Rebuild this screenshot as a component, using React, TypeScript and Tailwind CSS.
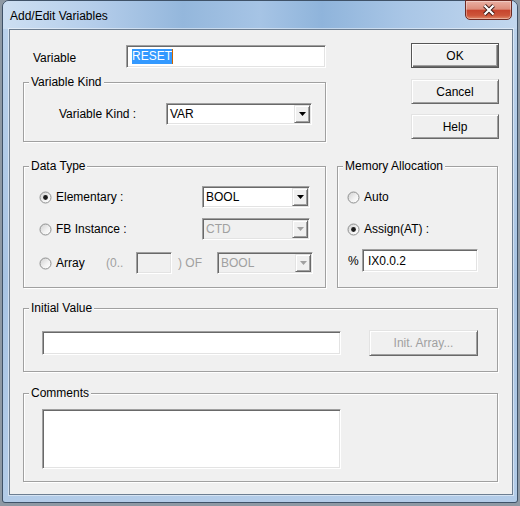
import React from "react";

// classic 3D borders
const sunken =
  "border border-t-[#a0a0a0] border-l-[#a0a0a0] border-b-white border-r-white shadow-[inset_1px_1px_0_#696969,inset_-1px_-1px_0_#e3e3e3]";
const raised =
  "border border-t-[#e3e3e3] border-l-[#e3e3e3] border-b-[#696969] border-r-[#696969] shadow-[inset_1px_1px_0_#fff,inset_-1px_-1px_0_#a0a0a0] bg-[#f0f0f0]";

const Radio = ({ checked }: { checked?: boolean }) => (
  <svg width="13" height="13" viewBox="0 0 13 13" className="shrink-0">
    <defs>
      <linearGradient id="radioFill" x1="0" y1="0" x2="1" y2="1">
        <stop offset="0" stopColor="#cfcfcf" />
        <stop offset="0.6" stopColor="#f4f4f4" />
        <stop offset="1" stopColor="#ffffff" />
      </linearGradient>
    </defs>
    <circle cx="6.5" cy="6.5" r="5.5" fill="url(#radioFill)" stroke="#8e8f8f" />
    {checked && <circle cx="6.5" cy="6.5" r="2.4" fill="#1c1c1c" />}
  </svg>
);

const Arrow = ({ disabled }: { disabled?: boolean }) => (
  <svg width="7" height="4" viewBox="0 0 7 4">
    <polygon points="0,0 7,0 3.5,4" fill={disabled ? "#a0a0a0" : "#000"} />
  </svg>
);

const Combo = ({
  value,
  disabled,
  className = "",
}: {
  value: string;
  disabled?: boolean;
  className?: string;
}) => (
  <div
    className={`${sunken} flex items-stretch p-[1px] h-[22px] ${
      disabled ? "bg-[#f0f0f0] text-[#a0a0a0]" : "bg-white"
    } ${className}`}
  >
    <span className="flex-1 flex items-center pl-[2px]">{value}</span>
    <span className={`${raised} w-[16px] flex items-center justify-center`}>
      <Arrow disabled={disabled} />
    </span>
  </div>
);

const GroupBox = ({
  title,
  className = "",
  children,
}: {
  title: string;
  className?: string;
  children?: React.ReactNode;
}) => (
  <div
    className={`relative border border-[#a0a0a0] shadow-[inset_1px_1px_0_#fff,1px_1px_0_#fff] ${className}`}
  >
    <span className="absolute -top-[8px] left-[5px] px-[2px] bg-[#f0f0f0] leading-[14px] whitespace-nowrap">
      {title}
    </span>
    {children}
  </div>
);

const DlgButton = ({
  label,
  isDefault,
  disabled,
  className = "",
}: {
  label: string;
  isDefault?: boolean;
  disabled?: boolean;
  className?: string;
}) => (
  <div
    className={`flex items-center justify-center ${
      isDefault
        ? "border border-[#555] bg-[#f0f0f0] shadow-[inset_1px_1px_0_#fff,inset_-1px_-1px_0_#696969,inset_-2px_-2px_0_#a0a0a0]"
        : raised
    } ${disabled ? "text-[#a0a0a0]" : "text-black"} ${className}`}
  >
    {label}
  </div>
);

export default function App() {
  return (
    <div className="w-[520px] h-[506px] bg-[#8e99a4] overflow-hidden font-['Liberation_Sans',Arial,sans-serif] text-[12px] leading-[14px] text-black">
      {/* window frame */}
      <div className="ml-[2px] w-[516px] h-[503px] rounded-t-[7px] rounded-b-[3px] border border-[#3f5268] bg-[linear-gradient(180deg,#bcd3ec_0%,#a8c4e3_55%,#b3cce8_100%)] flex flex-col">
        {/* title bar */}
        <div className="h-[28px] flex items-start rounded-t-[6px] bg-[linear-gradient(90deg,#cddff2_0%,#b4cdea_18%,#94b7dc_35%,#a6c4e5_50%,#8fb4db_62%,#a9c6e6_78%,#c2d7ee_100%)]">
          <span className="pl-[7px] pt-[8px] text-black">Add/Edit Variables</span>
          <div className="ml-auto mr-[5px] -mt-[1px] w-[47px] h-[20px] rounded-b-[5px] border border-[#6e2a22] bg-[linear-gradient(180deg,#eab0a3_0%,#dd8d7b_45%,#c7442d_52%,#cd553a_80%,#e08868_100%)] shadow-[inset_0_0_0_1px_rgba(255,255,255,0.35)] flex items-center justify-center">
            <svg width="14" height="12" viewBox="0 0 14 12">
              <path d="M2.5 1.5 L11.5 10.5 M11.5 1.5 L2.5 10.5" stroke="#3a1a16" strokeWidth="4" />
              <path d="M2.5 1.5 L11.5 10.5 M11.5 1.5 L2.5 10.5" stroke="#fff" strokeWidth="2.2" />
            </svg>
          </div>
        </div>

        {/* client area */}
        <div className="ml-[6px] w-[504px] h-[466px] border border-[#6d7e91] bg-[#f0f0f0] shadow-[0_0_0_1px_rgba(255,255,255,0.45)] flex flex-col pl-[13px]">
          {/* top section */}
          <div className="flex">
            <div className="w-[303px] flex flex-col">
              <div className="pt-[15px] flex items-center h-[38px]">
                <span className="pl-[10px] w-[103px] mt-[3px]">Variable</span>
                <div className={`${sunken} bg-white w-[200px] h-[23px] flex items-center pl-[5px]`}>
                  <span className="bg-[#3399ff] text-white leading-[15px]">RESET</span>
                  <span className="w-[1px] h-[15px] bg-[#cc6600]" />
                </div>
              </div>
              <GroupBox title="Variable Kind" className="mt-[14px] h-[60px] pt-[20px]">
                <div className="flex items-center">
                  <span className="pl-[35px] w-[142px]">Variable Kind :</span>
                  <Combo value="VAR" className="w-[146px]" />
                </div>
              </GroupBox>
            </div>
            <div className="ml-[85px] w-[88px] pt-[13px] flex flex-col">
              <DlgButton label="OK" isDefault className="h-[25px]" />
              <DlgButton label="Cancel" className="h-[25px] mt-[11px]" />
              <DlgButton label="Help" className="h-[25px] mt-[10px]" />
            </div>
          </div>

          {/* data type / memory allocation */}
          <div className="flex mt-[24px]">
            <GroupBox title="Data Type" className="w-[303px] h-[122px] pt-[19px] pl-[15px]">
              <div className="flex items-center h-[22px]">
                <Radio checked />
                <span className="ml-[4px] w-[146px]">Elementary :</span>
                <Combo value="BOOL" className="w-[108px]" />
              </div>
              <div className="flex items-center h-[22px] mt-[10px]">
                <Radio />
                <span className="ml-[4px] w-[146px]">FB Instance :</span>
                <Combo value="CTD" disabled className="w-[108px]" />
              </div>
              <div className="flex items-center h-[22px] mt-[12px]">
                <Radio />
                <span className="ml-[4px] w-[50px]">Array</span>
                <span className="w-[30px] text-[#a0a0a0]">(0..</span>
                <div className={`${sunken} bg-[#f0f0f0] w-[36px] h-[22px]`} />
                <span className="ml-[6px] w-[39px] text-[#a0a0a0]">) OF</span>
                <Combo value="BOOL" disabled className="w-[96px]" />
              </div>
            </GroupBox>
            <GroupBox title="Memory Allocation" className="ml-[11px] w-[161px] h-[122px] pt-[19px] pl-[9px]">
              <div className="flex items-center h-[22px]">
                <Radio />
                <span className="ml-[4px]">Auto</span>
              </div>
              <div className="flex items-center h-[22px] mt-[10px]">
                <Radio checked />
                <span className="ml-[4px]">Assign(AT) :</span>
              </div>
              <div className="flex items-center h-[23px] mt-[9px]">
                <span className="pl-[1px] w-[15px]">%</span>
                <div className={`${sunken} bg-white w-[116px] h-[23px] flex items-center pl-[5px]`}>
                  IX0.0.2
                </div>
              </div>
            </GroupBox>
          </div>

          {/* initial value */}
          <GroupBox title="Initial Value" className="mt-[20px] w-[475px] h-[64px] pt-[21px] pl-[18px]">
            <div className="flex items-center h-[26px]">
              <div className={`${sunken} bg-white w-[299px] h-[24px]`} />
              <DlgButton label="Init. Array..." disabled className="ml-[28px] w-[109px] h-[26px]" />
            </div>
          </GroupBox>

          {/* comments */}
          <GroupBox title="Comments" className="mt-[21px] w-[475px] h-[89px] pt-[15px] pl-[18px]">
            <div className={`${sunken} bg-white w-[299px] h-[60px]`} />
          </GroupBox>
        </div>
      </div>
    </div>
  );
}
